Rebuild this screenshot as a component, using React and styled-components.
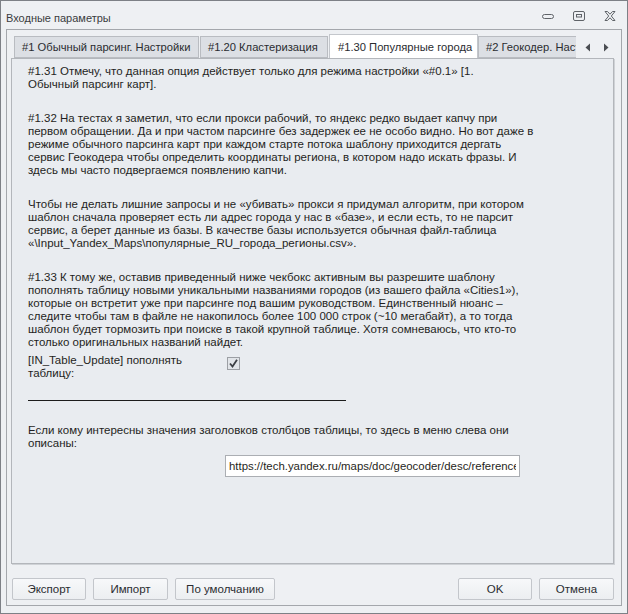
import React from 'react';
import styled, { createGlobalStyle } from 'styled-components';

const GlobalStyle = createGlobalStyle`
  html, body {
    margin: 0;
    padding: 0;
    background: #eef0f3;
  }
  * {
    box-sizing: border-box;
  }
`;

const paragraphs = [
  [
    '#1.31 Отмечу, что данная опция действует только для режима настройки «#0.1»  [1.',
    'Обычный парсинг карт].',
  ],
  [
    '#1.32 На тестах я заметил, что если прокси рабочий, то яндекс редко выдает капчу при',
    'первом обращении. Да и при частом парсинге без задержек ее не особо видно. Но вот даже в',
    'режиме обычного парсинга карт при каждом старте потока шаблону приходится дергать',
    'сервис Геокодера чтобы определить координаты региона, в котором надо искать фразы. И',
    'здесь мы часто подвергаемся появлению капчи.',
  ],
  [
    'Чтобы не делать лишние запросы и не «убивать» прокси я придумал алгоритм, при котором',
    'шаблон сначала проверяет есть ли адрес города у нас в «базе», и если есть, то не парсит',
    'сервис, а берет данные из базы. В качестве базы используется обычная файл-таблица',
    '«\\Input_Yandex_Maps\\популярные_RU_города_регионы.csv».',
  ],
  [
    '#1.33 К тому же, оставив приведенный ниже чекбокс активным вы разрешите шаблону',
    'пополнять таблицу новыми уникальными названиями городов (из вашего файла «Cities1»),',
    'которые он встретит уже при парсинге под вашим руководством. Единственный нюанс –',
    'следите чтобы там в файле не накопилось более 100 000 строк (~10 мегабайт), а то тогда',
    'шаблон будет тормозить при поиске в такой крупной таблице. Хотя сомневаюсь, что кто-то',
    'столько оригинальных названий найдет.',
  ],
];

const tabs = [
  { label: '#1 Обычный парсинг. Настройки', width: 185 },
  { label: '#1.20 Кластеризация', width: 128 },
  { label: '#1.30 Популярные города', width: 149, active: true },
  { label: '#2 Геокодер. Настройки', width: 140 },
];

function App() {
  return (
    <>
      <GlobalStyle />
      <Window>
        <TitleBar>
          <Title>Входные параметры</Title>
          <Controls>
            <svg width="14" height="10" viewBox="0 0 14 10">
              <rect x="1.5" y="3.5" width="11" height="4" rx="2" fill="none" stroke="#5f6368" />
            </svg>
            <svg width="14" height="12" viewBox="0 0 14 12">
              <rect x="1.5" y="1.5" width="11" height="9" rx="1.5" fill="none" stroke="#5f6368" />
              <rect x="4.5" y="4.5" width="5" height="2.5" fill="none" stroke="#5f6368" />
            </svg>
            <svg width="14" height="12" viewBox="0 0 14 12">
              <path
                d="M2 1.5 L4.5 1.5 L7 4.2 L9.5 1.5 L12 1.5 L8.3 6 L12 10.5 L9.5 10.5 L7 7.8 L4.5 10.5 L2 10.5 L5.7 6 Z"
                fill="none"
                stroke="#5f6368"
                strokeLinejoin="round"
              />
            </svg>
          </Controls>
        </TitleBar>
        <Frame>
          <TabStrip>
            <TabList>
              {tabs.map((t) => (
                <Tab key={t.label} $active={t.active} $width={t.width}>
                  {t.label}
                </Tab>
              ))}
            </TabList>
            <Arrows>
              <svg width="6" height="9" viewBox="0 0 6 9">
                <path d="M5 0.5 L0.5 4.5 L5 8.5 Z" fill="#4a4d52" />
              </svg>
              <svg width="6" height="9" viewBox="0 0 6 9">
                <path d="M1 0.5 L5.5 4.5 L1 8.5 Z" fill="#4a4d52" />
              </svg>
            </Arrows>
          </TabStrip>
          <Panel>
            {paragraphs.map((lines, i) => (
              <Paragraph key={i}>
                {lines.map((l) => (
                  <Line key={l}>{l}</Line>
                ))}
              </Paragraph>
            ))}
            <OptionRow>
              <OptionLabel>
                <Line>[IN_Table_Update] пополнять</Line>
                <Line>таблицу:</Line>
              </OptionLabel>
              <Check>
                <svg width="9" height="9" viewBox="0 0 9 9">
                  <path d="M1 4.5 L3.5 7.5 L8 0.8" fill="none" stroke="#3c3f44" strokeWidth="1.8" />
                </svg>
              </Check>
            </OptionRow>
            <Separator />
            <Paragraph>
              <Line>Если кому интересны значения заголовков столбцов таблицы, то здесь в меню слева они</Line>
              <Line>описаны:</Line>
            </Paragraph>
            <LinkRow>
              <LinkInput readOnly value="https://tech.yandex.ru/maps/doc/geocoder/desc/reference/" />
            </LinkRow>
          </Panel>
          <Footer>
            <Group>
              <Button $width={74}>Экспорт</Button>
              <Button $width={75}>Импорт</Button>
              <Button $width={100}>По умолчанию</Button>
            </Group>
            <Group>
              <Button $width={74}>OK</Button>
              <Button $width={75}>Отмена</Button>
            </Group>
          </Footer>
        </Frame>
      </Window>
    </>
  );
}

export default App;

const Window = styled.div`
  width: 628px;
  height: 614px;
  border: 1px solid #7d8086;
  background: #eef0f3;
  display: flex;
  flex-direction: column;
  font-family: 'Liberation Sans', Arial, sans-serif;
  color: #1f1f22;
`;

const TitleBar = styled.div`
  height: 29px;
  display: flex;
  align-items: center;
  justify-content: space-between;
  padding: 5px 10px 0 5px;
`;

const Title = styled.div`
  font-size: 11px;
  color: #3a3c40;
`;

const Controls = styled.div`
  display: flex;
  align-items: center;
  gap: 17px;
  margin-top: -3px;
  svg {
    display: block;
  }
`;

const Frame = styled.div`
  flex: 1;
  margin: 0 5px 7px 5px;
  border: 1px solid #a4a7ac;
  display: flex;
  flex-direction: column;
  padding: 2px 7px 5px 4px;
`;

const TabStrip = styled.div`
  display: flex;
  align-items: flex-end;
  height: 26px;
  padding-left: 3px;
  position: relative;
  z-index: 1;
`;

const TabList = styled.div`
  display: flex;
  align-items: flex-end;
  width: 562px;
  overflow: hidden;
`;

const Tab = styled.div`
  flex: none;
  width: ${(p) => p.$width}px;
  height: ${(p) => (p.$active ? 25 : 22)}px;
  margin-bottom: ${(p) => (p.$active ? -1 : 0)}px;
  margin-right: ${(p) => (p.$active ? 0 : 1)}px;
  display: flex;
  align-items: center;
  padding: ${(p) => (p.$active ? '0 0 1px 8px' : '0 0 0 7px')};
  font-size: 11.2px;
  white-space: nowrap;
  overflow: hidden;
  background: ${(p) => (p.$active ? '#ffffff' : '#dcdfe4')};
  border: 1px solid ${(p) => (p.$active ? '#c4c7cc' : '#b9bcc1')};
  border-bottom: ${(p) => (p.$active ? 'none' : '1px solid #b9bcc1')};
  color: #2a2c30;
`;

const Arrows = styled.div`
  display: flex;
  align-items: center;
  gap: 12px;
  height: 22px;
  padding-left: 9px;
`;

const Panel = styled.div`
  height: 506px;
  background: #e9ecf0;
  border: 1px solid #b3b6bb;
  box-shadow: 1px 1px 0 #cfd2d6;
  padding: 6px 16px 0 16px;
  font-size: 11.5px;
  line-height: 13px;
`;

const Paragraph = styled.div`
  margin-bottom: 21px;
`;

const Line = styled.div`
  white-space: nowrap;
`;

const OptionRow = styled.div`
  display: flex;
  align-items: flex-start;
  margin-top: -16px;
`;

const OptionLabel = styled.div`
  width: 199px;
`;

const Check = styled.div`
  width: 13px;
  height: 13px;
  margin-top: 3px;
  border: 1px solid #9c9fa4;
  background: #e2e5e9;
  display: flex;
  align-items: center;
  justify-content: center;
  svg {
    display: block;
  }
`;

const Separator = styled.div`
  width: 318px;
  height: 1px;
  background: #1c1c1c;
  margin: 20px 0 23px;
`;

const LinkRow = styled.div`
  display: flex;
  padding-left: 197px;
  margin-top: -16px;
`;

const LinkInput = styled.input`
  width: 295px;
  height: 22px;
  border: 1px solid #abaeb3;
  background: #ffffff;
  padding: 0 3px;
  font-family: 'Liberation Sans', Arial, sans-serif;
  font-size: 11.4px;
  color: #1f1f22;
  outline: none;
`;

const Footer = styled.div`
  display: flex;
  justify-content: space-between;
  margin-top: 14px;
  padding-left: 1px;
`;

const Group = styled.div`
  display: flex;
  gap: 7px;
`;

const Button = styled.button`
  width: ${(p) => p.$width}px;
  height: 22px;
  border: 1px solid #c3c6cb;
  border-radius: 2px;
  background: linear-gradient(#f7f8fa, #eceef1);
  font-family: 'Liberation Sans', Arial, sans-serif;
  font-size: 11.5px;
  color: #2a2c30;
  padding: 0;
`;
